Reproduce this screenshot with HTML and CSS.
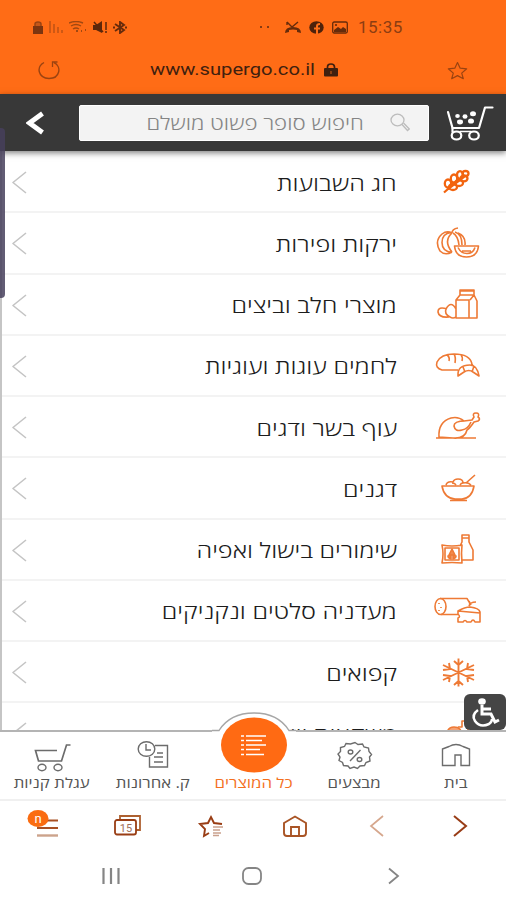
FILE: index.html
```html
<!DOCTYPE html>
<html lang="he" dir="rtl">
<head>
    <meta charset="UTF-8">
    <meta name="viewport" content="width=device-width, initial-scale=1.0">
    <title>SuperGo</title>
    <link rel="stylesheet" href="styles.css">
</head>
<body>
    <div class="browser-top">
        <div class="status-bar">
            <div class="status-group">
                <svg width="10" height="13" viewBox="0 0 10 13"><path d="M2 6V3q0-2 3-2t3 2v3" fill="#c4571a" stroke="#9a4413" stroke-width="1.5"/><path d="M0 5h10v8H0z" fill="#7c3510"/></svg>
                <svg width="14" height="12" viewBox="0 0 14 12"><path d="M1 0v12M5 3v9M9 6v6M13 9v3" stroke="#b54f15" stroke-width="1.3"/></svg>
                <svg width="18" height="12" viewBox="0 0 18 12"><path d="M0 2q7-3 14 0M2 5q5-3 10 0M4 8q3-2 6 0" fill="none" stroke="#a04812" stroke-width="1.4"/><path d="M7 9h2v2H7zM12 9h1v2h-1zM16 8h1v2h-1z" fill="#a04812"/></svg>
                <svg width="14" height="13" viewBox="0 0 14 13"><path d="M0 4h3l6-4v12L3 9H0z" fill="#5c270b"/><path d="M1 1l9 10M13 1v8M13 10v2" stroke="#5c270b" stroke-width="1.5"/></svg>
                <svg width="14" height="13" viewBox="0 0 14 13"><path d="M2 3l9 6-4 3V1l4 3-9 6" fill="none" stroke="#662b0c" stroke-width="1.9"/><path d="M0 5.500h2v2H0zM12 5.500h2v2h-2z" fill="#662b0c"/></svg>
            </div>
            <div class="status-group status-notes">
                <svg width="10" height="4" viewBox="0 0 10 4"><path d="M0 1h2v2H0zM7 1h2v2H7z" fill="#873b12"/></svg>
                <svg width="16" height="13" viewBox="0 0 16 13"><path d="M2 1l5 5 6-5M2 1v3" fill="none" stroke="#652b0b" stroke-width="1.4"/><path d="M0 12q0-6 8-6t8 6l-4-1V9q-4-1-8 0v2z" fill="#652b0b"/></svg>
                <svg width="15" height="13" viewBox="0 0 15 13"><ellipse cx="7.500" cy="6.500" rx="7.200" ry="6.200" fill="#4e220b"/><path d="M8 13V5q0-2 3-2M5 7.500h6" fill="none" stroke="#ff6f18" stroke-width="2"/></svg>
                <svg width="16" height="13" viewBox="0 0 16 13"><rect x=".7" y="1" width="14.600" height="11" rx="1.500" fill="none" stroke="#652b0b" stroke-width="1.300"/><path d="M2 11V9l4-3 3 2 2-2 3 2v3z" fill="#652b0b"/><circle cx="4" cy="4" r="1.100" fill="#652b0b"/></svg>
                <span class="clock">15:35</span>
            </div>
        </div>
        <div class="address-bar">
            <svg width="22" height="20" viewBox="0 0 22 20"><path d="M6 2.500C-2 7 0 18 11 18.500c11 0 13-12 5-16" fill="none" stroke="#9a4311" stroke-width="1.400"/><path d="M14.500 7V2h5" fill="none" stroke="#9a4311" stroke-width="1.300"/></svg>
            <div class="address">
                <span class="url">www.supergo.co.il</span>
                <svg width="14" height="14" viewBox="0 0 14 14"><path d="M3.500 6V4q0-3 3.500-3t3.500 3v2" fill="none" stroke="#40200f" stroke-width="1.700"/><rect x="0" y="5" width="14" height="8.500" rx="1" fill="#40200f"/><path d="M7 8v3" stroke="#a04a15" stroke-width="1.500"/></svg>
            </div>
            <svg width="21" height="19" viewBox="0 0 21 19"><path d="M10.500 1.500l2.700 5.700 6.500.6-5 4.300 1.600 5.600-5.800-3.100-5.800 3.100 1.600-5.600-5-4.300 6.500-.6z" fill="none" stroke="#9a4311" stroke-width="1.200" stroke-linejoin="round"/></svg>
        </div>
    </div>

    <div class="site-header">
        <svg class="cart" width="48" height="36" viewBox="0 0 48 36" fill="none" stroke="#fff" stroke-width="2.200" stroke-linecap="round" stroke-linejoin="round"><path d="M2 7l4.500 16H33L39 2.500h7.500"/><path d="M6.500 23v4"/><ellipse cx="10.500" cy="30.500" rx="4.800" ry="4"/><ellipse cx="28" cy="30.500" rx="4.800" ry="4"/><path d="M14 26.500h11" stroke-width="1.300"/><g fill="#fff" stroke="none"><ellipse cx="11.500" cy="11" rx="2.300" ry="2"/><ellipse cx="19" cy="11.500" rx="2.500" ry="2.200"/><ellipse cx="27" cy="8.800" rx="3" ry="2.500"/><ellipse cx="14" cy="17" rx="3" ry="2.400"/><ellipse cx="25" cy="16" rx="3" ry="2.600"/></g></svg>
        <div class="search">
            <svg width="20" height="19" viewBox="0 0 20 19" fill="none" stroke="#bcbcbc" stroke-width="1.300"><ellipse cx="7.500" cy="7" rx="6.500" ry="5.800"/><path d="M12 11.500l5.500 6 1.800-1.500-5.800-6"/></svg>
            <span class="search-text">חיפוש סופר פשוט מושלם</span>
        </div>
        <svg class="back" width="18" height="24" viewBox="0 0 18 24"><path d="M16.500 2.500L3.500 12l13 9.500" fill="none" stroke="#fff" stroke-width="4.800"/></svg>
    </div>

    <div class="content">
        <div class="list">
            <div class="row">
                <svg class="icon wheat" width="48" height="36" viewBox="0 0 48 36"><path d="M10 27.500L14 24 31 11"/><ellipse cx="14" cy="18.500" rx="3.200" ry="4"/><ellipse cx="20" cy="13.500" rx="3.200" ry="4"/><ellipse cx="26" cy="10" rx="3" ry="3.800"/><ellipse cx="19" cy="22" rx="4" ry="3"/><ellipse cx="25" cy="18" rx="4" ry="3"/><ellipse cx="30" cy="13.500" rx="3.500" ry="2.800"/><ellipse cx="31.500" cy="8.500" rx="3" ry="2.500"/></svg>
                <span class="label">חג השבועות</span>
                <svg class="arrow" width="15" height="23" viewBox="0 0 15 23"><path d="M14 1L1 11.500 14 22"/></svg>
            </div>
            <div class="row">
                <svg class="icon" width="48" height="36" viewBox="0 0 48 36"><path d="M18 7Q13 4 8 8q-8 7-2 17 5 5 12 1M17 6.500q-9 1-9 10t10 10M18 7q-9 8 0 19M19 7q5 3 6 12M21 6q7 2 7 13M24 7q8 3 7 12M18 7q0-4 6-5M20.500 20h24q-1 11-12 11t-12-11zM24 21.500q3 6 9 6t8-6M28 25h9"/></svg>
                <span class="label">ירקות ופירות</span>
                <svg class="arrow" width="15" height="23" viewBox="0 0 15 23"><path d="M14 1L1 11.500 14 22"/></svg>
            </div>
            <div class="row">
                <svg class="icon" width="48" height="36" viewBox="0 0 48 36"><path d="M22 13l4-5V3h14v5l3 6v17H22zM26 4h14M26 8h14M22 13h13v18M36 13l4-5M16 30q-6-3-4-8 5-9 10 0v8q-3 2-6 0zM13 22q-9-3-9 3 1 6 11 5"/></svg>
                <span class="label">מוצרי חלב וביצים</span>
                <svg class="arrow" width="15" height="23" viewBox="0 0 15 23"><path d="M14 1L1 11.500 14 22"/></svg>
            </div>
            <div class="row">
                <svg class="icon" width="48" height="36" viewBox="0 0 48 36"><path d="M24 22H8q-7-2-5-8Q7 6 20 6q16 0 18 10l1 2M13 7q3 2 2 6M20 6q2 3 1 9M27 7q2 2 1 6M24 28q-1-11 12-11 7 0 9 11l-6-4q-4-3-9 0zM29 19l2 5M40 18l-2 6"/></svg>
                <span class="label">לחמים עוגות ועוגיות</span>
                <svg class="arrow" width="15" height="23" viewBox="0 0 15 23"><path d="M14 1L1 11.500 14 22"/></svg>
            </div>
            <div class="row">
                <svg class="icon" width="48" height="36" viewBox="0 0 48 36"><path d="M2 28h40M5 27Q4 12 17 8q7-2 13 3l8-1 2-3q-2-4 2-4 4 0 2 4 3 2 0 4l-4 1q-4 6-7 8-2 9-14 8zM31 11q-11 0-11 5 1 6 8 4 6-1 9-8"/></svg>
                <span class="label">עוף בשר ודגים</span>
                <svg class="arrow" width="15" height="23" viewBox="0 0 15 23"><path d="M14 1L1 11.500 14 22"/></svg>
            </div>
            <div class="row">
                <svg class="icon" width="48" height="36" viewBox="0 0 48 36"><path d="M8 15h32q-2 12-12 13h-7Q10 27 8 15zM16 29.500h17M12 14q1-4 7-3 1-3 5-3 5 0 5 4 5-1 8 2M18 12q3 0 4 2M29 12q-2 0-3 2M32 12l9-8"/></svg>
                <span class="label">דגנים</span>
                <svg class="arrow" width="15" height="23" viewBox="0 0 15 23"><path d="M14 1L1 11.500 14 22"/></svg>
            </div>
            <div class="row">
                <svg class="icon" width="48" height="36" viewBox="0 0 48 36"><path d="M8 13q10 2 20 0-1 8 0 18-10-1-20 0 2-9 0-18zM11 16h14v12H11zM28 28h11V18l-4-8V3h-7v7l-2 4M28 6h7"/><path d="M18 17l3 6h-6zM14 24l3-1v4q-3-1-3-3zM22 24l-3-1v4q3-1 3-3z" fill="#f2894c"/></svg>
                <span class="label">שימורים בישול ואפיה</span>
                <svg class="arrow" width="15" height="23" viewBox="0 0 15 23"><path d="M14 1L1 11.500 14 22"/></svg>
            </div>
            <div class="row">
                <svg class="icon" width="48" height="36" viewBox="0 0 48 36"><ellipse cx="6.500" cy="13.500" rx="5.500" ry="8"/><path d="M6 5.500h27q3 4 3 7M7 21.500h17M5 10v1M7 14v1M5 17v1M24 18q7-4 12-4 9 1 10 5v10h-5q-2-4-4 0h-4q-2-3-4 0h-5v-4q3-1 0-4zM24 18l22 2M35 13q1-4 7-4M37 12l-2-4"/></svg>
                <span class="label">מעדניה סלטים ונקניקים</span>
                <svg class="arrow" width="15" height="23" viewBox="0 0 15 23"><path d="M14 1L1 11.500 14 22"/></svg>
            </div>
            <div class="row">
                <svg class="icon" width="48" height="36" viewBox="0 0 48 36"><path stroke-width="1.900" d="M24.500 3.500v28M9 10l31 15M9 25l31-15M20 6l4.500 4L29 6M20 30l4.500-4 4.500 4M9 15l7-1-1-6M40 15l-7-1 1-6M9 20l7 1-1 6M40 20l-7 1 1 6"/></svg>
                <span class="label">קפואים</span>
                <svg class="arrow" width="15" height="23" viewBox="0 0 15 23"><path d="M14 1L1 11.500 14 22"/></svg>
            </div>
            <div class="row">
                <svg class="icon" width="48" height="36" viewBox="0 0 48 36"><path d="M13 19q0-8 7-8 8 0 7 8z" fill="#f5a274"/><path d="M24 11h4V5h6v14"/></svg>
                <span class="label">משקאות ויין</span>
                <svg class="arrow" width="15" height="23" viewBox="0 0 15 23"><path d="M14 1L1 11.500 14 22"/></svg>
            </div>
        </div>
        <div class="scroll-handle"></div>
        <svg class="access" width="42" height="36" viewBox="0 0 42 36"><rect width="42" height="36" rx="6" fill="#454545"/><ellipse cx="18" cy="7.500" rx="3.800" ry="3.200" fill="#fff"/><path d="M18 11v9h9l4 8 4-2M18 15h9" fill="none" stroke="#fff" stroke-width="3"/><path d="M14 16q-7 5-3 11 5 7 14 3 3-2 3-5" fill="none" stroke="#fff" stroke-width="2.500"/></svg>
    </div>

    <div class="tabs">
        <div class="tab">
            <svg width="30" height="32" viewBox="0 0 30 32"><path d="M1.500 9L8 6.500Q15 2.500 22 6.500L28.500 9v16.500H20V15h-6v10.500H1.500z"/></svg>
            <span class="tab-text">בית</span>
        </div>
        <div class="tab">
            <svg width="36" height="32" viewBox="0 0 36 32"><path d="M18 2.500l3 2 4.500-.5 1.500 3 4.500 1 .5 3.500 2.500 3-2 2.500.5 4-4 1.500-1.500 3-4.500.5-2.500 2.500-3.500-1.500-4 1.500-2-2.500-4.500-.5-1-3-3.500-2 1-3.500-2-3 2.500-2.500v-4l4-1 1.500-3 4.500.5z"/><path d="M23.500 10L13 21"/><ellipse cx="13.500" cy="12" rx="2.300" ry="2"/><ellipse cx="22.500" cy="19.500" rx="2.300" ry="2"/></svg>
            <span class="tab-text">מבצעים</span>
        </div>
        <div class="tab active">
            <svg class="bubble" width="84" height="66" viewBox="0 0 84 66"><path d="M0 19h7Q18 1 42 1t35 18h7v47H0z" fill="#fff" stroke="none"/><path d="M0 18.500h7Q18 1 42 1t35 17.500h7" stroke="#a6a6a6"/><ellipse cx="42" cy="33" rx="33" ry="27.500" fill="#ff6a13" stroke="none"/><path d="M34 24h20M34 28.500h16M34 33h20M34 37.500h14M34 42.500h18" stroke="#fff" stroke-width="1.700"/><path d="M29 24h3M29 28.500h3M29 33h3M29 37.500h3M29 42.500h3" stroke="#fff" stroke-width="1.700"/></svg>
            <span class="tab-text">כל המוצרים</span>
        </div>
        <div class="tab">
            <svg width="32" height="32" viewBox="0 0 32 32"><path d="M18 5.500h12.500v21.500h-18V17"/><ellipse cx="9.500" cy="9" rx="8.300" ry="7.300"/><path d="M9 4v6h5M20 13h6M17 17h9M17 22h9"/></svg>
            <span class="tab-text">ק. אחרונות</span>
        </div>
        <div class="tab">
            <svg width="38" height="32" viewBox="0 0 38 32"><path d="M24 10.500H2.500l3 10.500h23l5-16h4" stroke-width="1.700"/><ellipse cx="9" cy="27.500" rx="4" ry="3.200"/><ellipse cx="25" cy="27.500" rx="4" ry="3.200"/></svg>
            <span class="tab-text">עגלת קניות</span>
        </div>
    </div>

    <div class="browser-bar">
        <svg width="32" height="28" viewBox="0 0 32 28"><path d="M10 4l12 10-12 10" stroke="#983c16" stroke-width="2"/></svg>
        <svg width="32" height="28" viewBox="0 0 32 28"><path d="M22 4L10 14l12 10" stroke="#d6a78d" stroke-width="1.700"/></svg>
        <svg width="32" height="28" viewBox="0 0 32 28"><path d="M6 11l11-6.500L28 11v10q0 3-3 3H9q-3 0-3-3zM13 24V15h8v9" stroke="#a95425" stroke-width="1.900"/></svg>
        <svg width="32" height="28" viewBox="0 0 32 28"><path d="M28 12l-8-1-3-6-3 6-8 1 5 5-1 7 5-3" stroke="#993d14" stroke-width="1.900"/><path d="M19 15h10M19 18h7M19 21h8M19 23.500h6" stroke="#caa18d" stroke-width="1.500"/></svg>
        <svg width="32" height="28" viewBox="0 0 32 28"><path d="M9 7V4h20v14h-4" stroke="#ad6030" stroke-width="1.800"/><rect x="4" y="8" width="21" height="14.500" rx="2" stroke="#993d14" stroke-width="1.800"/><text x="15" y="19.500" class="tab-count">15</text></svg>
        <svg class="menu" width="34" height="32" viewBox="0 0 34 32"><path d="M12 10.500h20M11 18h21" stroke="#a85023" stroke-width="2"/><path d="M11 25.500h21" stroke="#cca38b" stroke-width="2.400"/><ellipse cx="12" cy="8.500" rx="10.500" ry="8.500" fill="#fa6c11"/><text x="12" y="12.500" class="menu-note">n</text></svg>
    </div>

    <div class="system-nav">
        <svg width="20" height="18" viewBox="0 0 20 18"><path d="M6 1.500l9 7.500-9 7.500" stroke-width="1.800"/></svg>
        <svg width="20" height="18" viewBox="0 0 20 18"><rect x="1" y="1" width="18" height="16" rx="5.500" stroke-width="1.800"/></svg>
        <svg width="20" height="18" viewBox="0 0 20 18"><path d="M2.500 1v16M10 1v16M17.500 1v16" stroke-width="2.200"/></svg>
    </div>
</body>
</html>
```
FILE: styles.css
```css
* {
    box-sizing: border-box;
}
body {
    margin: 0;
    width: 506px;
    height: 900px;
    overflow: hidden;
    background-color: #fff;
    font-family: "Open Sans", "Noto Sans", sans-serif;
    display: flex;
    flex-direction: column;
}
svg {
    display: block;
    flex-shrink: 0;
}
.browser-top {
    height: 94px;
    background-color: #ff6c16;
    direction: ltr;
}
.status-bar {
    height: 46px;
    padding: 8px 103px 0 33px;
    display: flex;
    justify-content: space-between;
    align-items: center;
}
.status-group {
    display: flex;
    align-items: center;
    gap: 6px;
}
.status-notes {
    gap: 8px;
}
.status-notes svg:first-child {
    margin-right: 7px;
}
.clock {
    font: 17px/20px Roboto, sans-serif;
    letter-spacing: 0.5px;
    color: #8c3d12;
    margin-left: 2px;
    width: 45px;
}
.address-bar {
    height: 48px;
    padding: 0 38px;
    display: flex;
    justify-content: space-between;
    align-items: center;
}
.address {
    display: flex;
    align-items: center;
    gap: 10px;
    width: 188px;
    margin-right: 20px;
}
.url {
    font: 16px/22px Roboto, sans-serif;
    color: #40200f;
    width: 164px;
    transform: scaleX(1.26);
    transform-origin: left;
}
.site-header {
    height: 57px;
    flex-shrink: 0;
    background-color: #383838;
    display: flex;
    align-items: center;
    padding: 0 12px 0 26px;
    box-shadow: 0 2px 6px rgba(0,0,0,0.5);
    position: relative;
    z-index: 1;
}
.search {
    width: 350px;
    height: 36px;
    margin-right: 17px;
    background-color: #f3f3f3;
    border: 1px solid #fff;
    border-radius: 2px;
    display: flex;
    align-items: center;
    padding-right: 18px;
}
.search-text {
    margin-right: 26px;
    font-size: 19px;
    font-weight: 300;
    color: #858585;
    white-space: nowrap;
    transform: scaleX(1.17);
    transform-origin: right;
}
.back {
    margin-right: auto;
}
.content {
    height: 579px;
    flex-shrink: 0;
    position: relative;
}
.list {
    height: 100%;
    overflow: hidden;
    padding-top: 1px;
    border-left: 2px solid #c5c5c5;
}
.row {
    height: 61.25px;
    border-bottom: 2px solid #f3f3f3;
    display: flex;
    align-items: center;
    padding: 2px 24px 0 10px;
}
.icon, .arrow {
    fill: none;
    stroke: #ee7a35;
    stroke-width: 1.6;
    stroke-linejoin: round;
}
.wheat {
    stroke: #f2640f;
    stroke-width: 2.3;
}
.label {
    margin-right: 37px;
    font-size: 21px;
    font-weight: 340;
    line-height: 30px;
    color: #1c1c1c;
    white-space: nowrap;
    transform: scaleX(1.2);
    transform-origin: right;
}
.arrow {
    margin-right: auto;
    stroke: #c4c4c4;
}
.scroll-handle {
    position: absolute;
    left: -4px;
    top: -23px;
    width: 9px;
    height: 170px;
    border-radius: 4px;
    background-color: rgba(70,64,92,0.85);
    z-index: 2;
}
.access {
    position: absolute;
    right: 0;
    bottom: 0;
}
.tabs {
    height: 71px;
    flex-shrink: 0;
    border-top: 2px solid #b4b4b4;
    border-bottom: 2px solid #f0f0f0;
    display: flex;
    position: relative;
    padding-left: 1px;
}
.tab {
    flex: 1;
    display: flex;
    flex-direction: column;
    align-items: center;
    padding-top: 8px;
    color: #555;
}
.tab svg {
    fill: none;
    stroke: #6c6c6c;
    stroke-width: 1.4;
}
.tab-text {
    font-size: 14px;
    line-height: 20px;
    margin-top: 1px;
    white-space: nowrap;
    transform: scaleX(1.2);
}
.active {
    color: #f4711f;
}
.active .bubble {
    margin: -28px 0 -6px;
}
.browser-bar {
    height: 50px;
    display: flex;
    justify-content: space-between;
    align-items: center;
    padding: 0 30px 0 26px;
}
.browser-bar svg {
    fill: none;
}
.tab-count, .menu-note {
    font: 11px Roboto, sans-serif;
    text-anchor: middle;
    direction: ltr;
    fill: #a0705a;
}
.menu-note {
    font-size: 13px;
    fill: #fff;
}
.system-nav {
    height: 49px;
    display: flex;
    justify-content: space-between;
    align-items: center;
    padding: 0 103px 0 101px;
}
.system-nav svg {
    fill: none;
    stroke: #858585;
}
```
